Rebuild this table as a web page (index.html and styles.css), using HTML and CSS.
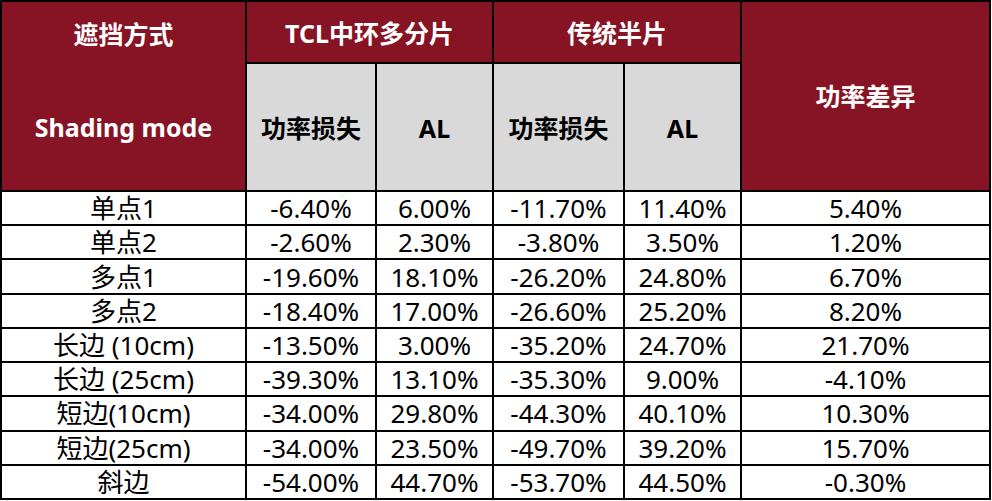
FILE: index.html
```html
<!DOCTYPE html>
<html lang="zh-CN">
<head>
<meta charset="utf-8">
<title>遮挡方式对比</title>
<link rel="stylesheet" href="styles.css">
</head>
<body>
<div class="sheet">
  <div class="cell head head-top c1">遮挡方式</div>
  <div class="cell head head-top span2 c2">TCL中环多分片</div>
  <div class="cell head head-top span2 c4">传统半片</div>
  <div class="cell head diff">功率差异</div>
  <div class="cell head head-sub c1">Shading mode</div>
  <div class="cell sub">功率损失</div>
  <div class="cell sub">AL</div>
  <div class="cell sub">功率损失</div>
  <div class="cell sub">AL</div>

  <div class="cell">单点1</div><div class="cell">-6.40%</div><div class="cell">6.00%</div><div class="cell">-11.70%</div><div class="cell">11.40%</div><div class="cell">5.40%</div>
  <div class="cell">单点2</div><div class="cell">-2.60%</div><div class="cell">2.30%</div><div class="cell">-3.80%</div><div class="cell">3.50%</div><div class="cell">1.20%</div>
  <div class="cell">多点1</div><div class="cell">-19.60%</div><div class="cell">18.10%</div><div class="cell">-26.20%</div><div class="cell">24.80%</div><div class="cell">6.70%</div>
  <div class="cell">多点2</div><div class="cell">-18.40%</div><div class="cell">17.00%</div><div class="cell">-26.60%</div><div class="cell">25.20%</div><div class="cell">8.20%</div>
  <div class="cell">长边 (10cm)</div><div class="cell">-13.50%</div><div class="cell">3.00%</div><div class="cell">-35.20%</div><div class="cell">24.70%</div><div class="cell">21.70%</div>
  <div class="cell">长边 (25cm)</div><div class="cell">-39.30%</div><div class="cell">13.10%</div><div class="cell">-35.30%</div><div class="cell">9.00%</div><div class="cell">-4.10%</div>
  <div class="cell">短边(10cm)</div><div class="cell">-34.00%</div><div class="cell">29.80%</div><div class="cell">-44.30%</div><div class="cell">40.10%</div><div class="cell">10.30%</div>
  <div class="cell">短边(25cm)</div><div class="cell">-34.00%</div><div class="cell">23.50%</div><div class="cell">-49.70%</div><div class="cell">39.20%</div><div class="cell">15.70%</div>
  <div class="cell">斜边</div><div class="cell">-54.00%</div><div class="cell">44.70%</div><div class="cell">-53.70%</div><div class="cell">44.50%</div><div class="cell">-0.30%</div>
</div>
</body>
</html>
```

FILE: styles.css
```css
html, body {
  margin: 0;
  padding: 0;
  background: #ffffff;
}

.sheet {
  width: 991px;
  height: 500px;
  box-sizing: border-box;
  display: grid;
  grid-template-columns: 243px 128px 115px 129px 115px 247px;
  grid-template-rows: 60px 126px repeat(9, 1fr);
  gap: 2px;
  padding: 2px;
  background: #000000;
  font-family: "Noto Sans", "Noto Sans CJK SC", sans-serif;
  font-size: 26px;
  color: #000000;
}

.cell {
  background: #ffffff;
  display: flex;
  align-items: center;
  justify-content: center;
  white-space: nowrap;
  line-height: 1;
}

.head {
  background: #861424;
  color: #ffffff;
  font-weight: 700;
  font-size: 25px;
}

.head-top {
  padding-top: 3px;
}

.c1 {
  grid-column: 1;
}

.head-top.c1 {
  grid-row: 1;
  margin-bottom: -2px;
}

.head-sub.c1 {
  grid-row: 2;
  margin-top: -2px;
  padding-top: 2px;
}

.span2 {
  grid-column: span 2;
}

.diff {
  grid-column: 6;
  grid-row: 1 / span 2;
  padding-top: 1px;
}

.sub {
  background: #d9d9d9;
  font-weight: 700;
  font-size: 25px;
  padding-top: 2px;
}
```
